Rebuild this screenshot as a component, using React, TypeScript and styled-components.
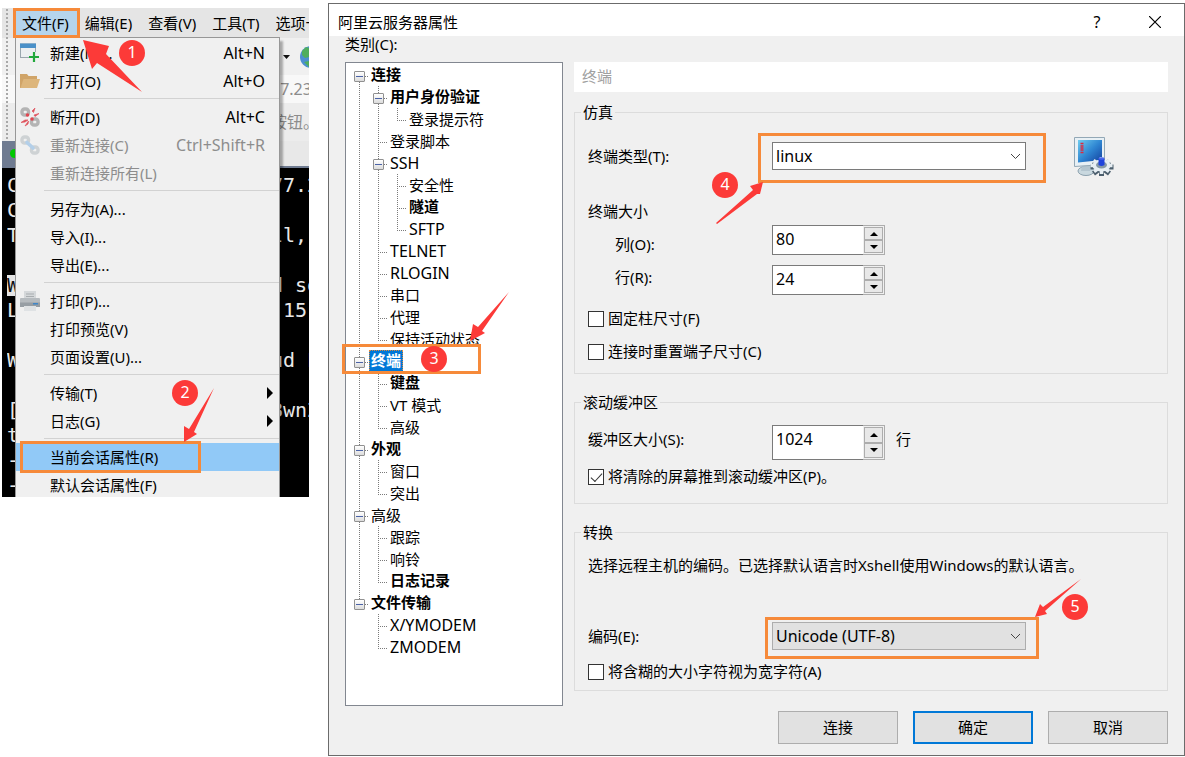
import React from "react";
import styled, { createGlobalStyle, css } from "styled-components";

const Global = createGlobalStyle`
  *, *::before, *::after { box-sizing: border-box; }
  body {
    margin: 0;
    background: #fff;
    color: #000;
    font: 15px/20px "Noto Sans", "Noto Sans CJK SC", sans-serif;
  }
  button, input, select { font: inherit; color: inherit; margin: 0; }
  ul { list-style: none; margin: 0; padding: 0; }
`;

const Page = styled.main`
  display: flex;
  align-items: flex-start;
  gap: 19px;
  padding-left: 2px;
`;

/* ---------- annotations ---------- */

const Highlight = styled.span<{ $inset: string }>`
  position: absolute;
  inset: ${(p) => p.$inset};
  border: 3px solid #f68a3a;
  pointer-events: none;
  z-index: 3;
`;

const Badge = styled.span<{ $x: number; $y: number }>`
  position: absolute;
  left: ${(p) => p.$x}px;
  top: ${(p) => p.$y}px;
  width: 26px;
  height: 26px;
  border-radius: 50%;
  background: #fc3a38;
  color: #fff;
  font-size: 16px;
  font-weight: 400;
  line-height: 24px;
  text-align: center;
  z-index: 4;
`;

const ArrowSvg = styled.svg<{ $x: number; $y: number }>`
  position: absolute;
  left: ${(p) => p.$x}px;
  top: ${(p) => p.$y}px;
  fill: #fc3a38;
  pointer-events: none;
  z-index: 4;
`;

function Arrow({ x, y, w, h, points }: { x: number; y: number; w: number; h: number; points: string }) {
  return (
    <ArrowSvg $x={x} $y={y} width={w} height={h} viewBox={`0 0 ${w} ${h}`} aria-hidden>
      <polygon points={points} />
    </ArrowSvg>
  );
}

/* ---------- terminal application ---------- */

const AppShot = styled.section`
  position: relative;
  flex: 0 0 307px;
  height: 489px;
  margin-top: 8px;
  overflow: hidden;
  background: #000;
`;

const Chrome = styled.div`
  position: relative;
  height: 131px;
  background: #f0f0f0;
  &::before {
    content: "";
    position: absolute;
    left: 4px;
    top: 1px;
    bottom: 0;
    width: 2px;
    background: repeating-linear-gradient(#a8a8a8 0 2px, transparent 2px 4px);
  }
`;

const MenuBar = styled.nav`
  display: flex;
  height: 30px;
  padding-left: 12px;
  background: #e5e5e5;
`;

const MenuBarItem = styled.button<{ $open?: boolean }>`
  flex: none;
  border: 0;
  padding: 0 8px;
  background: ${(p) => (p.$open ? "#b5d4ec" : "transparent")};
`;

const ChromeRow = styled.div<{ $h: number; $bg: string }>`
  display: flex;
  align-items: center;
  justify-content: flex-end;
  height: ${(p) => p.$h}px;
  background: ${(p) => p.$bg};
  color: #8c8c8c;
  font-size: 16px;
`;

const Tail = styled.span`
  flex: none;
  display: flex;
  align-items: center;
  width: 38px;
  overflow: hidden;
  white-space: nowrap;
`;

const TabStrip = styled.div`
  display: flex;
  align-items: center;
  justify-content: space-between;
  height: 29px;
  background: #6f7b91;
`;

const Dot = styled.span`
  width: 9px;
  height: 9px;
  margin-left: 8px;
  border-radius: 50%;
  background: #00c800;
`;

const TabRest = styled.span`
  width: 29px;
  align-self: stretch;
  background: #e8e8e8;
  border-bottom: 2px solid #6f7b91;
`;

const Terminal = styled.div`
  padding: 5px 0 0 5px;
  color: #e8e8e8;
  font: 20px/25px "DejaVu Sans Mono", "Liberation Mono", monospace;
`;

const TermLine = styled.div`
  display: flex;
  height: 25px;
  white-space: pre;
  overflow: hidden;
`;

const TermStart = styled.span<{ $inv?: boolean }>`
  flex: 0 0 264px;
  ${(p) =>
    p.$inv &&
    css`
      color: #111;
      background: linear-gradient(#e5e5e5, #e5e5e5) 0 2px / 12px 21px no-repeat;
    `}
`;

const Blue = styled.span`
  color: #1a1aa8;
`;

const termLines: [string, React.ReactNode, boolean?][] = [
  ["C", "77.2"],
  ["C", ""],
  ["T", "ll,"],
  ["", ""],
  ["W", "d so", true],
  ["L", " 15"],
  ["", ""],
  ["W", <>ud <Blue>E</Blue></>],
  ["", ""],
  ["[", "8wnZ"],
  ["t", ""],
  ["-", ""],
  ["-", ""],
];

const Menu = styled.div`
  position: absolute;
  left: 13px;
  top: 29px;
  width: 265px;
  padding: 1px 0;
  background: #f0f0f0;
  border: 1px solid #979797;
  box-shadow: 3px 4px 2px rgba(0, 0, 0, 0.3);
  z-index: 2;
`;

const MenuItem = styled.button<{ $active?: boolean }>`
  position: relative;
  display: flex;
  align-items: center;
  width: 100%;
  height: 28px;
  padding: 0 14px 0 4px;
  border: 0;
  text-align: left;
  background: ${(p) => (p.$active ? "#91c9f7" : "transparent")};
  &:disabled { color: #8d8d8d; }
`;

const IconSlot = styled.span`
  display: flex;
  width: 30px;
`;

const Keys = styled.span`
  margin-left: auto;
  font-size: 16px;
`;

const Sub = styled.span`
  margin: 0 -8px 0 auto;
  border: 6px solid transparent;
  border-left-color: #000;
  border-right: 0;
`;

const Rule = styled.hr`
  height: 1px;
  margin: 3px 0 4px 28px;
  border: 0;
  background: #d2d2d2;
`;

const NewIcon = () => (
  <svg width="20" height="20" viewBox="0 0 20 20" aria-hidden>
    <rect x="0.500" y="1" width="15" height="13.500" fill="#eceff1" stroke="#9aa6ae" />
    <rect x="0" y="0.500" width="16" height="4.500" fill="#4a90c8" />
    <path d="M14 9v10M9 14h10" stroke="#f0f0f0" strokeWidth="4" />
    <path d="M14 9v10M9 14h10" stroke="#22a83c" strokeWidth="2.200" />
  </svg>
);

const FolderIcon = () => (
  <svg width="20" height="20" viewBox="0 0 20 20" aria-hidden>
    <path d="M0 3h7l1.500 2H17v12H0z" fill="#d0a468" />
    <path d="M3.500 8H20l-3 9H0.500z" fill="#ddb67c" />
  </svg>
);

const ChainIcon = ({ broken }: { broken?: boolean }) => (
  <svg width="20" height="20" viewBox="0 0 20 20" aria-hidden fill="none">
    <g stroke={broken ? "#b4b4b4" : "#ced2d4"} strokeWidth="3.400">
      <rect x="2" y="2" width="6.500" height="6" rx="2.600" />
      <rect x="11.500" y="12" width="6.500" height="6" rx="2.600" />
    </g>
    {broken ? (
      <g fill="#df4650">
        <circle cx="7.500" cy="8" r="1.800" />
        <circle cx="12" cy="12" r="1.800" />
        <path d="M12 4l3-3-1.500 4.500zM14 8l5-1.500-4 3zM8 13l-3 0-4 2.500 4-0.500zM8.500 14L5 19l3-2z" stroke="#e0606a" strokeWidth="0.800" />
      </g>
    ) : (
      <path d="M7 7.500l6 5.500" stroke="#b3cfe9" strokeWidth="3.600" strokeLinecap="round" />
    )}
  </svg>
);

const PrinterIcon = () => (
  <svg width="20" height="20" viewBox="0 0 20 20" aria-hidden>
    <path d="M4 0h12v8H4z" fill="#d5d8da" />
    <path d="M6 3h8M6 5.500h8" stroke="#a9adb0" />
    <rect x="0" y="7" width="20" height="9" rx="1" fill="#b6bbbf" />
    <rect x="0" y="11.500" width="20" height="4.500" fill="#979ea4" />
    <rect x="13" y="12" width="5" height="1.500" fill="#3f86c8" />
    <path d="M4 15h12v5H4z" fill="#dfe2e4" />
  </svg>
);

type Entry = { label: string; keys?: string; icon?: React.ReactNode; off?: boolean; sub?: boolean; active?: boolean };
const menuGroups: Entry[][] = [
  [
    { label: "新建(N)...", keys: "Alt+N", icon: <NewIcon /> },
    { label: "打开(O)", keys: "Alt+O", icon: <FolderIcon /> },
  ],
  [
    { label: "断开(D)", keys: "Alt+C", icon: <ChainIcon broken /> },
    { label: "重新连接(C)", keys: "Ctrl+Shift+R", icon: <ChainIcon />, off: true },
    { label: "重新连接所有(L)", off: true },
  ],
  [{ label: "另存为(A)..." }, { label: "导入(I)..." }, { label: "导出(E)..." }],
  [{ label: "打印(P)...", icon: <PrinterIcon /> }, { label: "打印预览(V)" }, { label: "页面设置(U)..." }],
  [{ label: "传输(T)", sub: true }, { label: "日志(G)", sub: true }],
  [{ label: "当前会话属性(R)", active: true }, { label: "默认会话属性(F)" }],
];

function TerminalApp() {
  return (
    <AppShot>
      <Chrome>
        <MenuBar>
          <MenuBarItem $open>文件(F)</MenuBarItem>
          <MenuBarItem>编辑(E)</MenuBarItem>
          <MenuBarItem>查看(V)</MenuBarItem>
          <MenuBarItem>工具(T)</MenuBarItem>
          <MenuBarItem>选项卡</MenuBarItem>
        </MenuBar>
        <ChromeRow $h={37} $bg="#f0f0f0">
          <Tail>
            <svg width="38" height="24" viewBox="0 0 38 24" aria-hidden>
              <path d="M12 10h7l-3.500 4z" fill="#111" />
              <circle cx="40" cy="12" r="11" fill="#4c8fd0" />
              <path d="M31 6l4-4 3 1v9l-4 1-3-3zM33 17l5-1v6z" fill="#4fae5d" />
            </svg>
          </Tail>
        </ChromeRow>
        <ChromeRow $h={28} $bg="#f8f8f8"><Tail>77.23</Tail></ChromeRow>
        <ChromeRow $h={38} $bg="#ececec"><Tail>按钮。</Tail></ChromeRow>
      </Chrome>
      <TabStrip><Dot /><TabRest /></TabStrip>
      <Terminal>
        {termLines.map(([start, end, inv], i) => (
          <TermLine key={i}>
            <TermStart $inv={inv}>{start}</TermStart>
            <span>{end}</span>
          </TermLine>
        ))}
      </Terminal>
      <Menu>
        {menuGroups.map((group, g) => (
          <React.Fragment key={g}>
            {g > 0 && <Rule />}
            {group.map((m) => (
              <MenuItem key={m.label} $active={m.active} disabled={m.off}>
                <IconSlot>{m.icon}</IconSlot>
                {m.label}
                {m.keys && <Keys>{m.keys}</Keys>}
                {m.sub && <Sub />}
                {m.active && <Highlight $inset="-2px 78px -2px 4px" />}
              </MenuItem>
            ))}
          </React.Fragment>
        ))}
      </Menu>
      <Highlight $inset="0 229px 459px 11px" />
      <Arrow x={81} y={32} w={60} h={54} points="0,0 26,6 23,14 59,52 14,23 9,29" />
      <Badge $x={117} $y={32}>1</Badge>
      <Arrow x={180} y={379} w={34} h={56} points="2,55 2,39 7,42 32,1 12,45 15,47" />
      <Badge $x={170} $y={372}>2</Badge>
    </AppShot>
  );
}

/* ---------- properties dialog ---------- */

const Dialog = styled.section`
  flex: 1;
  min-width: 0;
  margin-top: 3px;
  background: #f0f0f0;
  border: 1px solid #6b6b6b;
`;

const TitleBar = styled.header`
  display: flex;
  align-items: center;
  height: 32px;
  padding-left: 9px;
  background: #fff;
`;

const Title = styled.h1`
  flex: 1;
  margin: 4px 0 0;
  font-size: 15px;
  font-weight: 400;
`;

const TitleButton = styled.button`
  display: grid;
  place-items: center;
  width: 58px;
  height: 32px;
  padding: 4px 0 0;
  border: 0;
  background: transparent;
  font-size: 16px;
`;

const Body = styled.div`
  padding: 0 16px 11px;
`;

const TreeCaption = styled.div`
  height: 26px;
  line-height: 16px;
`;

const Columns = styled.div`
  display: grid;
  grid-template-columns: 218px minmax(0, 1fr);
  gap: 11px;
`;

const TreeBox = styled.ul`
  min-height: 644px;
  padding: 1px 0 0 4px;
  background: #fff;
  border: 1px solid #828790;
`;

const TreeRow = styled.li`
  position: relative;
  display: flex;
  height: 22px;
`;

const dotsY = "repeating-linear-gradient(#7a7a7a 0 1px, transparent 1px 2px)";
const dotsX = "repeating-linear-gradient(90deg, #7a7a7a 0 1px, transparent 1px 2px)";

const Guide = styled.span<{ $up?: boolean; $down?: boolean; $arm?: boolean }>`
  position: relative;
  flex: 0 0 19px;
  background-repeat: no-repeat;
  background-image: ${(p) =>
    [p.$up ? dotsY : "none", p.$down ? dotsY : "none", p.$arm ? dotsX : "none"].join(",")};
  background-position: 9px 0, 9px 12px, 9px 12px;
  background-size: 1px 12px, 1px 10px, 9px 1px;
`;

const Toggle = styled.button`
  position: absolute;
  left: 4px;
  top: 7px;
  width: 11px;
  height: 11px;
  padding: 0;
  border: 1px solid #919191;
  border-radius: 1px;
  background: linear-gradient(#4b63a7, #4b63a7) center / 7px 1px no-repeat, linear-gradient(#fff, #dcdcdc);
`;

const NodeLabel = styled.span<{ $bold?: boolean; $selected?: boolean; $latin?: boolean }>`
  padding: 0 2px;
  line-height: ${(p) => (p.$bold ? 21 : 23)}px;
  white-space: nowrap;
  font-weight: ${(p) => (p.$bold ? 700 : 400)};
  font-size: ${(p) => (p.$latin ? 16 : 15)}px;
  ${(p) =>
    p.$selected &&
    css`
      color: #fff;
      background: #0078d7;
      outline: 1px dotted #e08a3c;
      outline-offset: -1px;
    `}
`;

type Node = { t: string; b?: boolean; sel?: boolean; kids?: Node[] };
const tree: Node[] = [
  {
    t: "连接", b: true,
    kids: [
      { t: "用户身份验证", b: true, kids: [{ t: "登录提示符" }] },
      { t: "登录脚本" },
      { t: "SSH", kids: [{ t: "安全性" }, { t: "隧道", b: true }, { t: "SFTP" }] },
      { t: "TELNET" },
      { t: "RLOGIN" },
      { t: "串口" },
      { t: "代理" },
      { t: "保持活动状态" },
    ],
  },
  { t: "终端", b: true, sel: true, kids: [{ t: "键盘", b: true }, { t: "VT 模式" }, { t: "高级" }] },
  { t: "外观", b: true, kids: [{ t: "窗口" }, { t: "突出" }] },
  { t: "高级", kids: [{ t: "跟踪" }, { t: "响铃" }, { t: "日志记录", b: true }] },
  { t: "文件传输", b: true, kids: [{ t: "X/YMODEM" }, { t: "ZMODEM" }] },
];

function renderNodes(nodes: Node[], lines: boolean[]): React.ReactNode {
  return nodes.map((n, i) => {
    const last = i === nodes.length - 1;
    const isFirstRoot = lines.length === 0 && i === 0;
    return (
      <React.Fragment key={n.t}>
        <TreeRow>
          {lines.map((on, k) => <Guide key={k} $up={on} $down={on} />)}
          <Guide $up={!isFirstRoot} $down={!last} $arm>
            {n.kids && <Toggle aria-label={"折叠 " + n.t} />}
          </Guide>
          <NodeLabel $bold={n.b} $selected={n.sel} $latin={/^[A-Z/]+$/.test(n.t)}>{n.t}</NodeLabel>
          {n.sel && (
            <>
              <Highlight $inset="-6px 81px -2px -8px" />
              <Arrow x={119} y={-59} w={42} h={51} points="1,50 4,33 9,36 40,1 13,40 16,42" />
              <Badge $x={71} $y={-4}>3</Badge>
            </>
          )}
        </TreeRow>
        {n.kids && renderNodes(n.kids, [...lines, !last])}
      </React.Fragment>
    );
  });
}

const Banner = styled.div`
  height: 30px;
  padding: 0 8px;
  margin-bottom: 10px;
  background: #fff;
  color: #a0a0a0;
  line-height: 29px;
`;

const Group = styled.fieldset<{ $foot: number }>`
  min-width: 0;
  margin: 0 0 18px;
  padding: 0 13px ${(p) => p.$foot}px;
  border: 1px solid #dcdcdc;
  &:last-child { margin-bottom: 0; }
`;

const Legend = styled.legend`
  height: 20px;
  margin-left: -7px;
  padding: 0 2px;
`;

const Field = styled.div<{ $top: number }>`
  position: relative;
  display: flex;
  align-items: baseline;
  margin-top: ${(p) => p.$top}px;
  > label:first-child { flex: 0 0 184px; }
`;

const SizeBlock = styled.div`
  display: grid;
  grid-template-columns: 184px 1fr;
  margin-top: 31px;
`;

const SizeLabels = styled.div`
  display: flex;
  flex-direction: column;
  gap: 13px;
  label { padding-left: 27px; }
`;

const SizeInputs = styled.div`
  display: flex;
  flex-direction: column;
  gap: 10px;
  padding-top: 24px;
`;

const Text = styled.p<{ $top: number }>`
  margin: ${(p) => p.$top}px 0 0;
`;

const SelectWrap = styled.div`
  position: relative;
  width: 254px;
  height: 28px;
`;

const Select = styled.select<{ $gray?: boolean }>`
  appearance: none;
  display: block;
  width: 100%;
  height: 100%;
  padding: 0 24px 0 3px;
  border: 1px solid ${(p) => (p.$gray ? "#adadad" : "#7a7a7a")};
  border-radius: 0;
  background: ${(p) => (p.$gray ? "#e1e1e1" : "#fff")};
  font-size: 16px;
`;

const Chevron = styled.svg`
  position: absolute;
  right: 5px;
  top: 11px;
  fill: none;
  stroke: #444;
  pointer-events: none;
`;

const Spin = styled.div<{ $h: number }>`
  display: flex;
  width: 113px;
  height: ${(p) => p.$h}px;
`;

const SpinInput = styled.input<{ $h: number }>`
  flex: 1;
  min-width: 0;
  padding: 0 3px ${(p) => p.$h - 28}px;
  border: 1px solid #7a7a7a;
  border-right: 0;
  border-radius: 0;
  background: #fff;
  font-size: 16px;
`;

const SpinButtons = styled.div`
  display: grid;
  grid-template-rows: 1fr 1fr;
  width: 22px;
  padding: 1px;
  border: 1px solid #adadad;
  border-left: 0;
  background: #f0f0f0;
`;

const SpinButton = styled.button`
  display: grid;
  place-items: center;
  min-height: 0;
  padding: 0;
  border: 1px solid #adadad;
  background: #e8e8e8;
`;

const Unit = styled.span`
  margin-left: 11px;
`;

const CheckLabel = styled.label<{ $top: number }>`
  display: flex;
  align-items: flex-end;
  gap: 4px;
  height: 18px;
  margin: ${(p) => p.$top}px 0 2px;
  line-height: 18px;
`;

const CheckBox = styled.input`
  appearance: none;
  display: grid;
  place-items: center;
  width: 16px;
  height: 16px;
  border: 1px solid #333;
  background: #fff;
  &:checked::after {
    content: "";
    width: 11px;
    height: 6px;
    margin-top: -3px;
    border: solid #333;
    border-width: 0 0 1px 1px;
    transform: rotate(-47deg);
  }
`;

const Footer = styled.footer`
  display: flex;
  justify-content: flex-end;
  gap: 15px;
  margin-top: 5px;
`;

const PushButton = styled.button<{ $primary?: boolean }>`
  width: 120px;
  height: 33px;
  padding: 0 0 2px;
  border: ${(p) => (p.$primary ? "2px solid #0078d7" : "1px solid #adadad")};
  background: #e1e1e1;
`;

const PcIcon = styled.svg`
  position: absolute;
  left: 486px;
  top: -5px;
`;

function Combo({ id, value, gray, children }: { id: string; value: string; gray?: boolean; children: React.ReactNode }) {
  return (
    <SelectWrap>
      <Select id={id} $gray={gray} defaultValue={value}>
        <option>{value}</option>
      </Select>
      <Chevron width="11" height="7" viewBox="0 0 11 7" aria-hidden>
        <path d="M1 1l4.500 4.500L10 1" />
      </Chevron>
      {children}
    </SelectWrap>
  );
}

function Spinner({ id, value, h = 30 }: { id: string; value: string; h?: number }) {
  return (
    <Spin $h={h}>
      <SpinInput id={id} defaultValue={value} $h={h} />
      <SpinButtons>
        <SpinButton aria-label="增加">
          <svg width="8" height="4" viewBox="0 0 8 4"><path d="M0 4l4-4 4 4z" /></svg>
        </SpinButton>
        <SpinButton aria-label="减少">
          <svg width="8" height="4" viewBox="0 0 8 4"><path d="M0 0l4 4 4-4z" /></svg>
        </SpinButton>
      </SpinButtons>
    </Spin>
  );
}

function TerminalIcon() {
  return (
    <PcIcon width="40" height="40" viewBox="0 0 40 40" aria-hidden>
      <defs>
        <linearGradient id="screen" x1="0" y1="0" x2="1" y2="1">
          <stop offset="0" stopColor="#6fcdf0" />
          <stop offset="0.5" stopColor="#2f86d2" />
          <stop offset="1" stopColor="#123f9e" />
        </linearGradient>
      </defs>
      <ellipse cx="12" cy="34" rx="8" ry="4.500" fill="#c9d8df" stroke="#8ba0ad" />
      <path d="M8 27h10l-2 7H7z" fill="#b4c5cf" />
      <path d="M0.500 0.500h30v27l-30 2z" fill="#e8f0f5" stroke="#93a8b6" />
      <path d="M4 3h24v20L4 25.500z" fill="url(#screen)" />
      <path d="M6.500 6.500h3M6.500 9h3M6.500 11h3M6.500 13h3M6.500 15.500h3" stroke="#e0283c" strokeWidth="1.400" />
      <g stroke="#4b5e6d" strokeWidth="5">
        <path d="M27.500 21v18M16.500 30h23M19.500 24.500l16 12M35.500 24.500l-16 12" />
      </g>
      <g stroke="#e6edf2" strokeWidth="3.600">
        <path d="M27.500 20v17M16.500 28.500h22M19.500 23.500l15.500 11M35.500 23.500l-15.500 11" />
      </g>
      <ellipse cx="27.500" cy="28.500" rx="9" ry="6" fill="#e6edf2" />
      <ellipse cx="27.500" cy="28" rx="5.500" ry="3.500" fill="#8598a6" />
      <path d="M24.500 21.500h6V28q-3 2-6 0z" fill="#1f43dc" />
      <ellipse cx="27.500" cy="21.500" rx="3" ry="1.200" fill="#4a68ec" />
    </PcIcon>
  );
}

function PropertiesDialog() {
  return (
    <Dialog role="dialog" aria-labelledby="dlg-title">
      <TitleBar>
        <Title id="dlg-title">阿里云服务器属性</Title>
        <TitleButton aria-label="帮助">?</TitleButton>
        <TitleButton aria-label="关闭">
          <svg width="12" height="12" viewBox="0 0 12 12" stroke="#000" strokeWidth="1.200">
            <path d="M0 0l12 12M12 0L0 12" />
          </svg>
        </TitleButton>
      </TitleBar>
      <Body>
        <TreeCaption>类别(C):</TreeCaption>
        <Columns>
          <TreeBox>{renderNodes(tree, [])}</TreeBox>
          <div>
            <Banner>终端</Banner>
            <Group $foot={11}>
              <Legend>仿真</Legend>
              <Field $top={20}>
                <label htmlFor="type">终端类型(T):</label>
                <Combo id="type" value="linux">
                  <Highlight $inset="-9px -20px -13px -14px" />
                  <Arrow x={-57} y={38} w={50} h={45} points="48,2 35,6 38,10 1,43 2,44 42,14 45,14" />
                  <Badge $x={-60} $y={30}>4</Badge>
                </Combo>
                <TerminalIcon />
              </Field>
              <SizeBlock>
                <SizeLabels>
                  <span>终端大小</span>
                  <label htmlFor="cols">列(O):</label>
                  <label htmlFor="rows">行(R):</label>
                </SizeLabels>
                <SizeInputs>
                  <Spinner id="cols" value="80" />
                  <Spinner id="rows" value="24" />
                </SizeInputs>
              </SizeBlock>
              <CheckLabel $top={14}><CheckBox type="checkbox" />固定柱尺寸(F)</CheckLabel>
              <CheckLabel $top={15}><CheckBox type="checkbox" />连接时重置端子尺寸(C)</CheckLabel>
            </Group>
            <Group $foot={16}>
              <Legend>滚动缓冲区</Legend>
              <Field $top={13}>
                <label htmlFor="buf">缓冲区大小(S):</label>
                <Spinner id="buf" value="1024" h={35} />
                <Unit>行</Unit>
              </Field>
              <CheckLabel $top={7}><CheckBox type="checkbox" defaultChecked />将清除的屏幕推到滚动缓冲区(P)。</CheckLabel>
            </Group>
            <Group $foot={8}>
              <Legend>转换</Legend>
              <Text $top={13}>选择远程主机的编码。已选择默认语言时Xshell使用Windows的默认语言。</Text>
              <Field $top={47}>
                <label htmlFor="enc">编码(E):</label>
                <Combo id="enc" value="Unicode (UTF-8)" gray>
                  <Highlight $inset="-5px -13px -9px -7px" />
                  <Arrow x={262} y={-44} w={50} h={41} points="1,39 6,26 9,29 47,1 11,33 13,36" />
                  <Badge $x={290} $y={-28}>5</Badge>
                </Combo>
              </Field>
              <CheckLabel $top={12}><CheckBox type="checkbox" />将含糊的大小字符视为宽字符(A)</CheckLabel>
            </Group>
          </div>
        </Columns>
        <Footer>
          <PushButton>连接</PushButton>
          <PushButton $primary>确定</PushButton>
          <PushButton>取消</PushButton>
        </Footer>
      </Body>
    </Dialog>
  );
}

export default function App() {
  return (
    <>
      <Global />
      <Page>
        <TerminalApp />
        <PropertiesDialog />
      </Page>
    </>
  );
}
